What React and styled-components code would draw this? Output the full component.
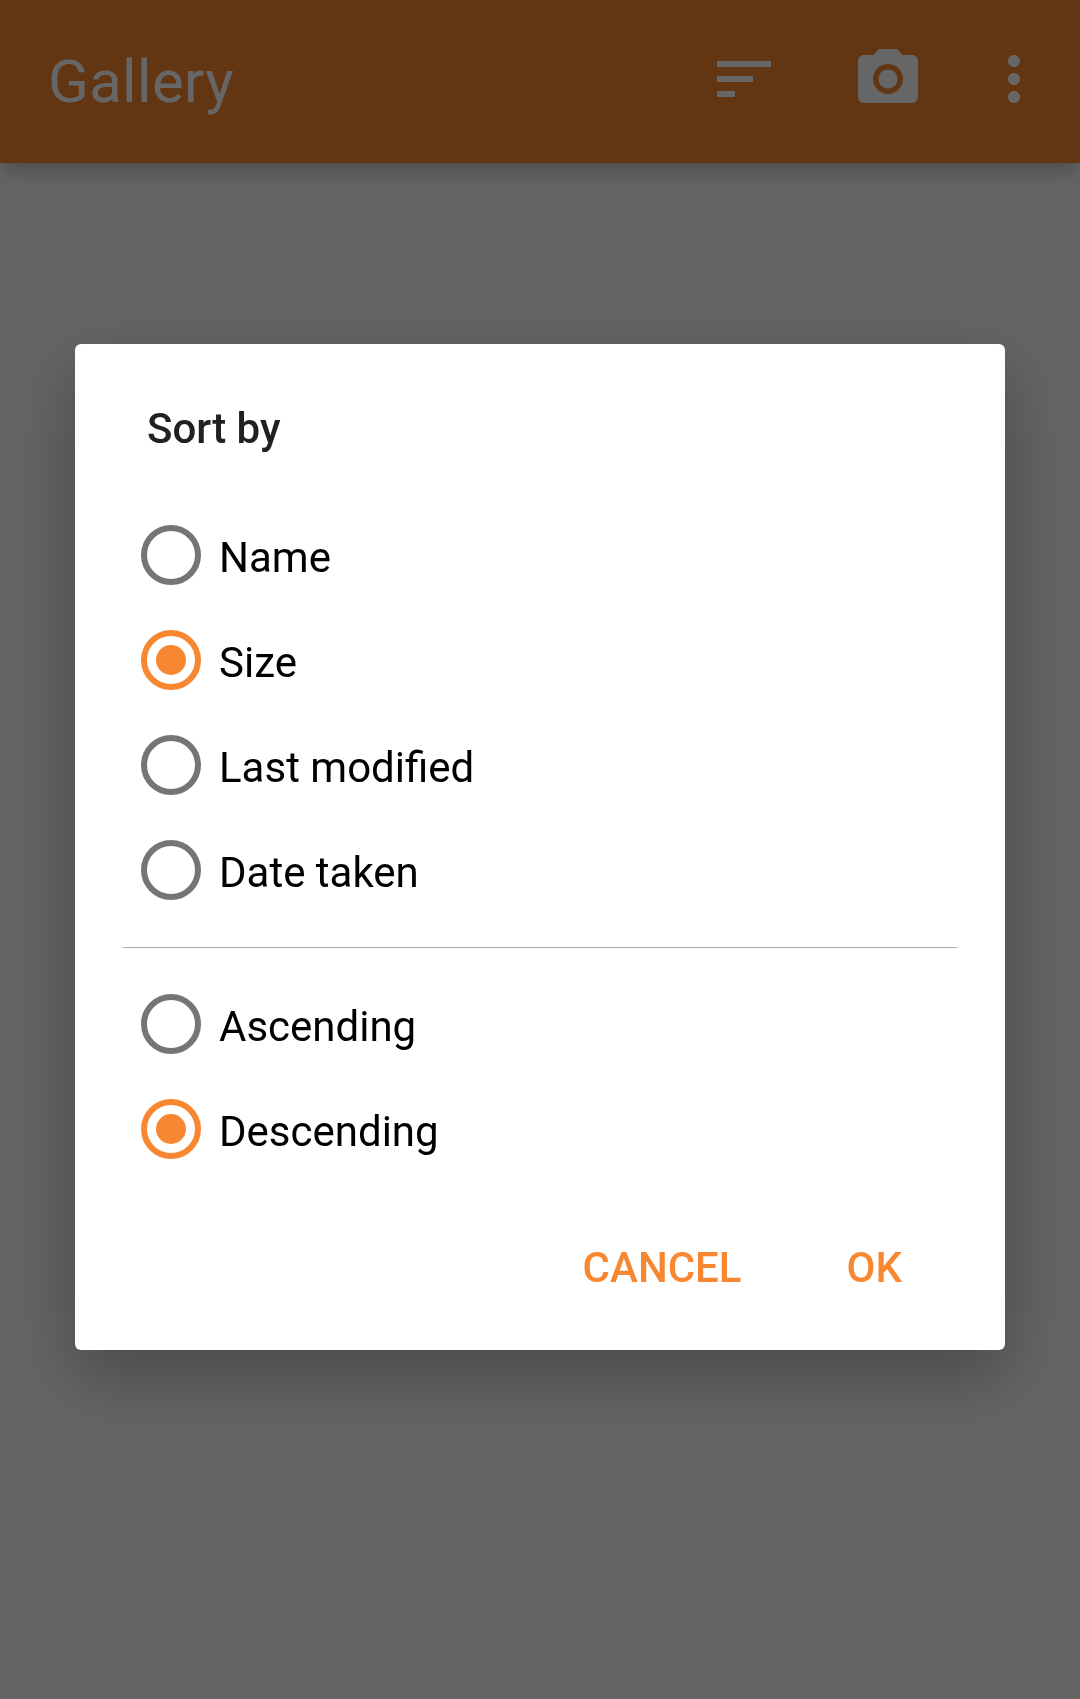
import React, { useState } from "react";
import styled, { createGlobalStyle } from "styled-components";

const ACCENT = "#f78731";

const GlobalStyle = createGlobalStyle`
  * { box-sizing: border-box; }
  body {
    margin: 0;
    background: #fafafa;
    font-family: Roboto, "Noto Sans", sans-serif;
    overflow: hidden;
  }
`;

const Screen = styled.div`
  height: 1699px;
  background: #fafafa;
`;

const AppBar = styled.header`
  display: flex;
  align-items: center;
  height: 163px;
  padding: 0 30px 0 48px;
  background: #f68530;
  color: #fff;
  box-shadow: 0 8px 20px -2px rgba(0, 0, 0, 0.27);
`;

const AppTitle = styled.h1`
  flex: 1;
  margin: 0;
  font-size: 60px;
  font-weight: 400;
  line-height: 71px;
  letter-spacing: 0.3px;
`;

const Actions = styled.div`
  display: flex;
  gap: 72px;
  margin-bottom: 5px;
`;

const Icon = styled.svg`
  display: block;
  width: 72px;
  height: 72px;
  fill: currentColor;
  margin-left: ${(p) => p.$shift || 0}px;
`;

const Scrim = styled.div`
  position: fixed;
  inset: 0;
  display: flex;
  justify-content: center;
  align-items: flex-start;
  padding-top: 344px;
  background: rgba(0, 0, 0, 0.6);
`;

const Dialog = styled.section`
  display: flex;
  flex-direction: column;
  width: 930px;
  height: 1006px;
  padding: 60px 48px 28px;
  border-radius: 6px;
  background: #fff;
  box-shadow: 0 26px 68px rgba(0, 0, 0, 0.28);
`;

const DialogTitle = styled.h2`
  margin: 0 24px 49px;
  font-size: 42px;
  font-weight: 500;
  line-height: 50px;
  color: #212121;
`;

const Options = styled.div`
  display: flex;
  flex-direction: column;
`;

const Option = styled.label`
  display: flex;
  align-items: flex-start;
  gap: 18px;
  height: 105px;
  padding: 22px 18px 23px;
  color: #000;
`;

const Radio = styled.span`
  display: grid;
  place-items: center;
  width: 60px;
  height: 60px;
  border: 6px solid ${(p) => (p.$checked ? ACCENT : "#757575")};
  border-radius: 50%;

  &::after {
    content: "";
    width: 30px;
    height: 30px;
    border-radius: 50%;
    background: ${(p) => (p.$checked ? ACCENT : "transparent")};
  }
`;

const OptionLabel = styled.span`
  padding-top: 8px;
  font-size: 42px;
  line-height: 50px;
`;

const Divider = styled.hr`
  width: 834px;
  height: 1px;
  margin: 24px 0;
  border: 0;
  background: #aaa;
`;

const ButtonBar = styled.footer`
  display: flex;
  justify-content: flex-end;
  gap: 3px;
  margin-top: auto;
  padding-right: 1px;
`;

const DialogButton = styled.button`
  height: 108px;
  padding: 0 ${(p) => p.$pad}px;
  border: 0;
  background: none;
  color: ${ACCENT};
  font: 500 42px/50px Roboto, "Noto Sans", sans-serif;
  text-transform: uppercase;
`;

const FIELDS = ["Name", "Size", "Last modified", "Date taken"];
const ORDERS = ["Ascending", "Descending"];

function RadioGroup({ items, value, onSelect }) {
  return (
    <Options role="radiogroup">
      {items.map((item) => (
        <Option key={item} onClick={() => onSelect(item)}>
          <Radio role="radio" aria-checked={item === value} $checked={item === value} />
          <OptionLabel>{item}</OptionLabel>
        </Option>
      ))}
    </Options>
  );
}

export default function App() {
  const [field, setField] = useState("Size");
  const [order, setOrder] = useState("Descending");

  return (
    <>
      <GlobalStyle />
      <Screen>
        <AppBar>
          <AppTitle>Gallery</AppTitle>
          <Actions>
            <Icon viewBox="0 0 24 24">
              <path d="M3 18h6v-2H3v2zM3 6v2h18V6H3zm0 7h12v-2H3v2z" />
            </Icon>
            <Icon viewBox="0 0 24 24">
              <circle cx="12" cy="12" r="3.2" />
              <path d="M9 2L7.17 4H4c-1.1 0-2 .9-2 2v12c0 1.1.9 2 2 2h16c1.1 0 2-.9 2-2V6c0-1.1-.9-2-2-2h-3.17L15 2H9zm3 15c-2.76 0-5-2.24-5-5s2.24-5 5-5 5 2.24 5 5-2.24 5-5 5z" />
            </Icon>
            <Icon viewBox="0 0 24 24" $shift={-18}>
              <path d="M12 8c1.1 0 2-.9 2-2s-.9-2-2-2-2 .9-2 2 .9 2 2 2zm0 2c-1.1 0-2 .9-2 2s.9 2 2 2 2-.9 2-2-.9-2-2-2zm0 6c-1.1 0-2 .9-2 2s.9 2 2 2 2-.9 2-2-.9-2-2-2z" />
            </Icon>
          </Actions>
        </AppBar>
      </Screen>
      <Scrim>
        <Dialog role="dialog">
          <DialogTitle>Sort by</DialogTitle>
          <RadioGroup items={FIELDS} value={field} onSelect={setField} />
          <Divider />
          <RadioGroup items={ORDERS} value={order} onSelect={setOrder} />
          <ButtonBar>
            <DialogButton $pad={48}>Cancel</DialogButton>
            <DialogButton $pad={54}>OK</DialogButton>
          </ButtonBar>
        </Dialog>
      </Scrim>
    </>
  );
}
